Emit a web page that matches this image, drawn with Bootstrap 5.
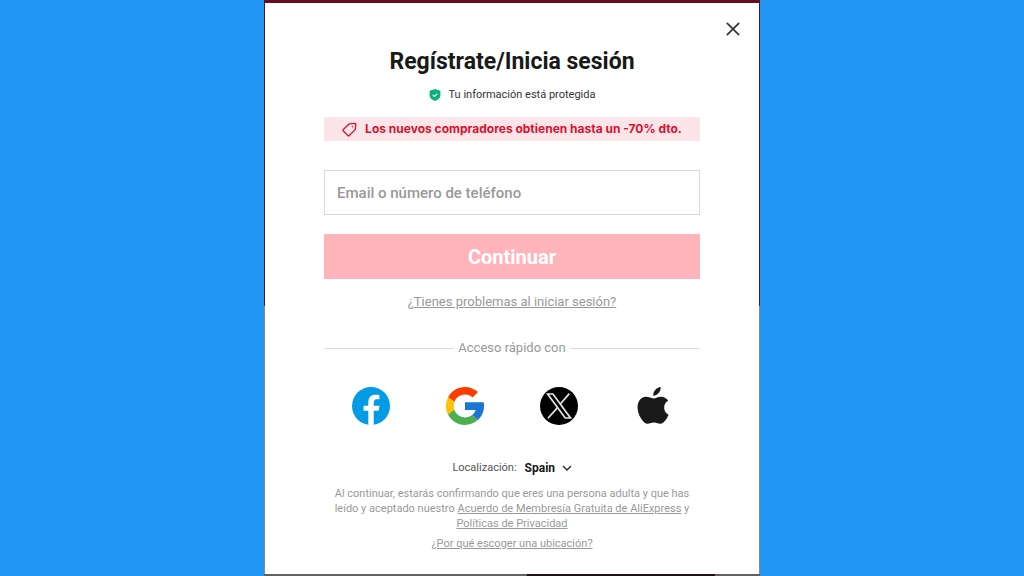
<!DOCTYPE html>
<html lang="es">
<head>
<meta charset="utf-8">
<meta name="viewport" content="width=device-width, initial-scale=1">
<title>Regístrate/Inicia sesión</title>
<link href="https://cdn.jsdelivr.net/npm/bootstrap@5.3.0/dist/css/bootstrap.min.css" rel="stylesheet">
<style>
  body { background: #2196f3; font-family: Roboto, "Liberation Sans", sans-serif; color: #191919; }

  /* The dimmed page shows as a thin frame round the dialog */
  .dialog-frame {
    width: 100%; max-width: 496px; padding: 3px 1px 2px;
    background:
      linear-gradient(90deg, #66605f 53%, #1b120f 53%, #1b120f 91%, #66605f 91%) bottom / 100% 2px no-repeat,
      linear-gradient(#650d20 306px, #8a8a8a 306px);
  }
  .dialog-body { background: #fff; padding: 43px 59px 23px; }

  .dialog-close { top: 16px; right: 16px; width: 20px; height: 20px; }
  .dialog-title { font-size: 23px; line-height: 32px; font-weight: 700; }
  .secure-note { font-size: 11px; line-height: 18px; color: #333; }
  .promo { margin-top: 13px; background: #fce5e8; color: #d9112f; font: 700 12px/24px Inter, sans-serif; }

  .account-form { margin-top: 29px; gap: 19px; }
  .account-field {
    height: 45px; padding: 0 12px; border: 1px solid #d8d8d8; border-radius: 0;
    font-size: 15px; font-weight: 500;
  }
  .account-field::placeholder { color: #999; opacity: 1; }
  .btn-continue {
    --bs-btn-disabled-bg: #ffb3bb; --bs-btn-disabled-border-color: #ffb3bb;
    --bs-btn-disabled-color: #fff; --bs-btn-disabled-opacity: 1;
    height: 45px; font-size: 20px; line-height: 24px; font-weight: 700;
  }
  .muted-13 { font-size: 13px; line-height: 20px; color: #999; }
  .muted-11 { font-size: 11px; line-height: 15px; color: #999; }
  .muted-13 a, .muted-11 a { color: inherit; }
  .help-row { margin-top: 13px; }
  .quick-row { margin-top: 26px; }
  .rule-line { height: 1px; background: #dadada; }

  .social { margin-top: 28px; }
  .social svg { width: 40px; height: 40px; display: block; }

  .region { margin-top: 33px; font-size: 11px; line-height: 18px; color: #555; }
  .region-select {
    appearance: none; font-size: 12px; font-weight: 700; line-height: 18px; color: #191919;
    padding: 0 16px 0 0;
    background: url("data:image/svg+xml,%3Csvg xmlns='http://www.w3.org/2000/svg' viewBox='0 0 10 10' fill='none' stroke='%23222' stroke-width='1.3'%3E%3Cpath d='M1 3l4 4 4-4'/%3E%3C/svg%3E") right center / 10px 10px no-repeat;
  }
  .terms { margin: 9px 0 5px; }
</style>
</head>
<body>
<div class="d-flex justify-content-center min-vh-100">
  <main class="dialog-frame d-flex flex-column">
    <div class="dialog-body position-relative flex-grow-1 text-center">
      <button type="button" class="dialog-close position-absolute btn p-0 border-0 d-flex" aria-label="Cerrar">
        <svg viewBox="0 0 20 20" width="20" height="20" fill="none" stroke="#333" stroke-width="1.7" stroke-linecap="round"><path d="M4.300 4.300l11.400 11.400M15.700 4.300L4.300 15.700"/></svg>
      </button>

      <h1 class="dialog-title mb-2">Regístrate/Inicia sesión</h1>

      <div class="secure-note d-flex justify-content-center align-items-center gap-2">
        <svg viewBox="0 0 12 12" width="12" height="12" aria-hidden="true"><path fill="#0bb07b" d="M6 .1l5.400 1.700v4.600c0 2.600-2.200 4.200-5.400 5.500-3.200-1.300-5.400-2.900-5.400-5.500V1.800z"/><path d="M3.700 5.900l1.700 1.600 3-2.900" fill="none" stroke="#fff" stroke-width="1.100"/></svg>
        <span>Tu información está protegida</span>
      </div>

      <div class="promo d-flex justify-content-center align-items-center gap-2">
        <svg viewBox="0 0 15 15" width="15" height="15" fill="none" stroke="#d9112f" stroke-width="1.300" stroke-linejoin="round" aria-hidden="true"><path d="M7.300 1.800l6-.4.500.5-.5 5.500-6.200 6.400q-.5.500-1 0L1.100 8.800q-.4-.5 0-1z"/><circle cx="10.400" cy="4.700" r=".5" fill="#d9112f" stroke-width=".5"/></svg>
        <span>Los nuevos compradores obtienen hasta un -70% dto.</span>
      </div>

      <form class="account-form d-flex flex-column">
        <input type="text" class="account-field form-control" placeholder="Email o número de teléfono" aria-label="Email o número de teléfono">
        <button type="submit" class="btn btn-continue rounded-0 w-100 border-0" disabled>Continuar</button>
      </form>

      <div class="help-row muted-13"><a href="#">¿Tienes problemas al iniciar sesión?</a></div>

      <div class="quick-row muted-13 d-flex align-items-center gap-1">
        <span class="rule-line flex-grow-1"></span>
        <span>Acceso rápido con</span>
        <span class="rule-line flex-grow-1"></span>
      </div>

      <div class="social d-flex justify-content-around">
        <button type="button" class="btn p-0 border-0" aria-label="Facebook">
          <svg viewBox="0 0 40 40"><circle cx="20" cy="20" r="19" fill="#039be5"/><path fill="#fff" d="M22.700 24.800h5l.8-5h-5.800v-2.700c0-2.100.7-3.900 2.600-3.900h3.100V8.900c-.6-.1-1.700-.2-3.900-.2-4.600 0-7.200 2.400-7.200 7.900v3.200h-4.700v5h4.700v13.900c1 .2 1.900.3 2.800.3.900 0 1.800-.1 2.600-.2z"/></svg>
        </button>
        <button type="button" class="btn p-0 border-0" aria-label="Google">
          <svg viewBox="3 3 42 42"><path fill="#1976d2" d="M43.600 20.100H24v8h11.300c-.8 2.200-2.200 4.100-4.100 5.500l6.200 5.200C37 39.200 44 34 44 24c0-1.300-.1-2.600-.4-3.900z"/><path fill="#ffc107" d="M6.300 14.700C4.800 17.400 4 20.600 4 24s.8 6.500 2.300 9.300l6.600-5.100a12 12 0 010-8.500z"/><path fill="#ff3d00" d="M6.300 14.700l6.600 4.800C14.700 15.100 19 12 24 12c3.100 0 5.800 1.200 8 3.100l5.700-5.700C34 6.100 29.300 4 24 4 16.300 4 9.700 8.300 6.300 14.700z"/><path fill="#4caf50" d="M24 44c5.200 0 9.900-2 13.400-5.200l-6.200-5.200A12 12 0 0112.700 28l-6.500 5C9.500 39.600 16.200 44 24 44z"/></svg>
        </button>
        <button type="button" class="btn p-0 border-0" aria-label="X">
          <svg viewBox="0 0 40 40"><circle cx="20" cy="20" r="19" fill="#000"/><g fill="none" stroke="#e4e4e4" stroke-width="1.700"><path d="M8.600 8h5.300l17.600 24h-5.300z"/><path d="M30.300 7.600L21.300 18M18.500 21.600L9 32.300"/></g></svg>
        </button>
        <button type="button" class="btn p-0 border-0" aria-label="Apple">
          <svg viewBox="1 0 38 38"><path fill="#191919" d="M34.800 27.300c-.8 1.800-1.200 2.700-2.300 4.300-1.500 2.300-3.600 4.300-5.800 4.300-2.100 0-2.700-1.200-5.900-1.200s-3.900 1.200-6 1.200c-2.200 0-3.900-1.600-5.500-4C5.900 27.200 4 19.800 6.400 15c1.500-3 4.300-4.700 7-4.700 2.800 0 4.800 1.500 7.200 1.500 2.200 0 4-1.600 7.100-1.600 2.400 0 5 1.300 6.800 3.600-5.700 3.300-4.800 11.200.3 13.500zM20.300 9.200c-.4-3.900 3-7.800 6.900-8.200.5 4.200-3.100 8.200-6.900 8.200z"/></svg>
        </button>
      </div>

      <div class="region d-flex justify-content-center align-items-center gap-2">
        <label for="region">Localización:</label>
        <select id="region" class="region-select border-0"><option>Spain</option></select>
      </div>

      <p class="terms muted-11">Al continuar, estarás confirmando que eres una persona adulta y que has leído y aceptado nuestro <a href="#">Acuerdo de Membresía Gratuita de AliExpress</a> y <a href="#">Políticas de Privacidad</a></p>
      <p class="muted-11 mb-0"><a href="#">¿Por qué escoger una ubicación?</a></p>
    </div>
  </main>
</div>
<script src="https://cdn.jsdelivr.net/npm/bootstrap@5.3.0/dist/js/bootstrap.bundle.min.js"></script>
</body>
</html>
